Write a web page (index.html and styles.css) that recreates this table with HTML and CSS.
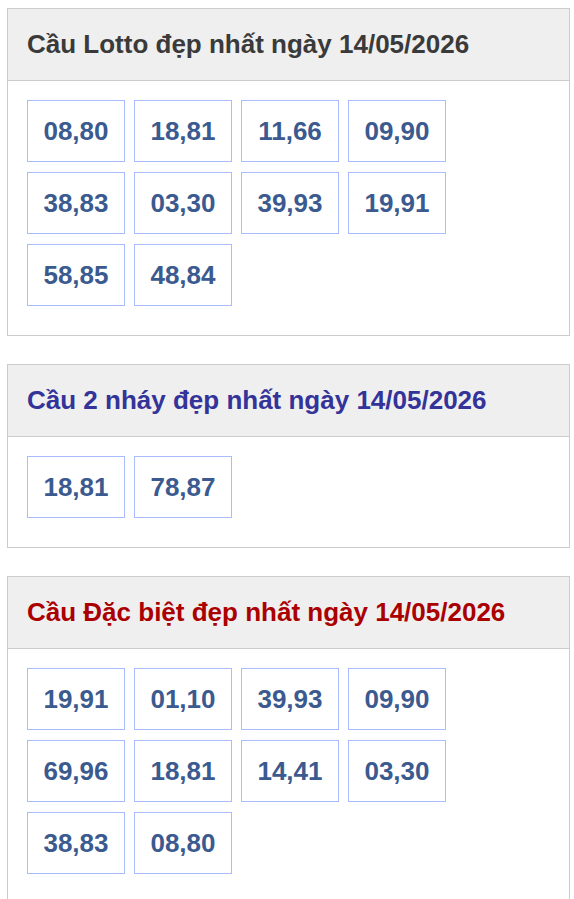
FILE: index.html
```html
<!DOCTYPE html>
<html lang="vi">
<head>
  <meta charset="UTF-8">
  <meta name="viewport" content="width=device-width, initial-scale=1.0">
  <title>Cầu Lotto đẹp nhất</title>
  <link rel="stylesheet" href="styles.css">
</head>
<body>
  <!-- Cầu Lotto -->
  <section class="box">
    <h2 class="box-title">Cầu Lotto đẹp nhất ngày 14/05/2026</h2>
    <div class="box-body">
      <span class="pair">08,80</span>
      <span class="pair">18,81</span>
      <span class="pair">11,66</span>
      <span class="pair">09,90</span>
      <span class="pair">38,83</span>
      <span class="pair">03,30</span>
      <span class="pair">39,93</span>
      <span class="pair">19,91</span>
      <span class="pair">58,85</span>
      <span class="pair">48,84</span>
    </div>
  </section>

  <!-- Cầu 2 nháy -->
  <section class="box">
    <h2 class="box-title title-blue">Cầu 2 nháy đẹp nhất ngày 14/05/2026</h2>
    <div class="box-body">
      <span class="pair">18,81</span>
      <span class="pair">78,87</span>
    </div>
  </section>

  <!-- Cầu đặc biệt -->
  <section class="box">
    <h2 class="box-title title-red">Cầu Đặc biệt đẹp nhất ngày 14/05/2026</h2>
    <div class="box-body">
      <span class="pair">19,91</span>
      <span class="pair">01,10</span>
      <span class="pair">39,93</span>
      <span class="pair">09,90</span>
      <span class="pair">69,96</span>
      <span class="pair">18,81</span>
      <span class="pair">14,41</span>
      <span class="pair">03,30</span>
      <span class="pair">38,83</span>
      <span class="pair">08,80</span>
    </div>
  </section>
</body>
</html>
```

FILE: styles.css
```css
*,
*::before,
*::after {
  box-sizing: border-box;
}
body {
  margin: 0;
  padding: 8px 4px 0 7px;
  font-family: "Liberation Sans", Arial, sans-serif;
  background-color: #fff;
}

/* khung mỗi loại cầu */
.box {
  border: 1px solid #ccc;
  margin-bottom: 28px;
}
.box-title {
  margin: 0;
  padding: 0 19px;
  height: 72px;
  line-height: 71px;
  font-size: 26px;
  font-weight: bold;
  color: #3a3a3a;
  background-color: #efefef;
  border-bottom: 1px solid #ccc;
}
.title-blue {
  color: #333399;
}
.title-red {
  color: #aa0000;
}

.box-body {
  display: flex;
  flex-wrap: wrap;
  padding: 19px;
}
.pair {
  width: 98px;
  height: 62px;
  margin: 0 9px 10px 0;
  line-height: 60px;
  text-align: center;
  font-size: 26px;
  font-weight: bold;
  color: #3b5a8f;
  border: 1px solid #a9bcff;
}
```
